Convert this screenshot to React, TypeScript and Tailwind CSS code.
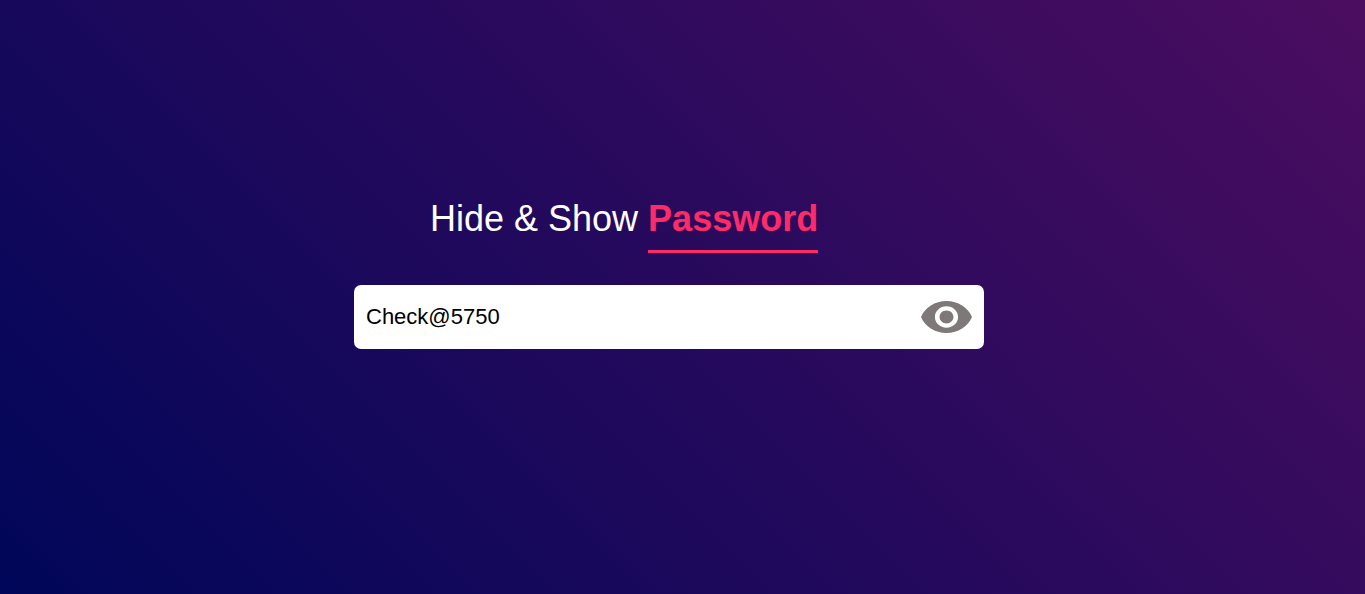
import { useState } from "react";

export default function App() {
  const [visible, setVisible] = useState(true);
  const [password, setPassword] = useState("Check@5750");

  return (
    <main className="flex min-h-screen justify-center bg-linear-[45deg,#000659,#4b0d60] px-4 pt-[196px] pb-16 font-['Liberation_Sans',Arial,sans-serif]">
      <div className="w-full max-w-[630px] lg:mr-[27px]">
        <h1 className="flex flex-wrap gap-[10px] pl-[76px] text-[36px] leading-[46px] text-white">
          <span>Hide &amp; Show</span>
          <span className="border-b-[3px] border-[#ff2a68] pb-2 font-bold text-[#ff2a68]">Password</span>
        </h1>
        <div className="mt-8 flex h-16 items-center rounded-[7px] bg-white px-3">
          <input
            type={visible ? "text" : "password"}
            aria-label="Password"
            value={password}
            onChange={(e) => setPassword(e.target.value)}
            className="h-full min-w-0 flex-1 bg-transparent text-[22px] text-black outline-none"
          />
          <button
            type="button"
            aria-label={visible ? "Hide password" : "Show password"}
            onClick={() => setVisible(!visible)}
            className="shrink-0 cursor-pointer"
          >
            <svg viewBox="1 4.5 22 15" preserveAspectRatio="none" className="block h-8 w-[51px] fill-[#7f7879]" aria-hidden="true">
              <path d="M12 4.5C7 4.5 2.73 7.61 1 12c1.73 4.39 6 7.5 11 7.5s9.27-3.11 11-7.5c-1.73-4.39-6-7.5-11-7.5zM12 17c-2.76 0-5-2.24-5-5s2.24-5 5-5 5 2.24 5 5-2.24 5-5 5zm0-8c-1.66 0-3 1.34-3 3s1.34 3 3 3 3-1.34 3-3-1.34-3-3-3z" />
            </svg>
          </button>
        </div>
      </div>
    </main>
  );
}
